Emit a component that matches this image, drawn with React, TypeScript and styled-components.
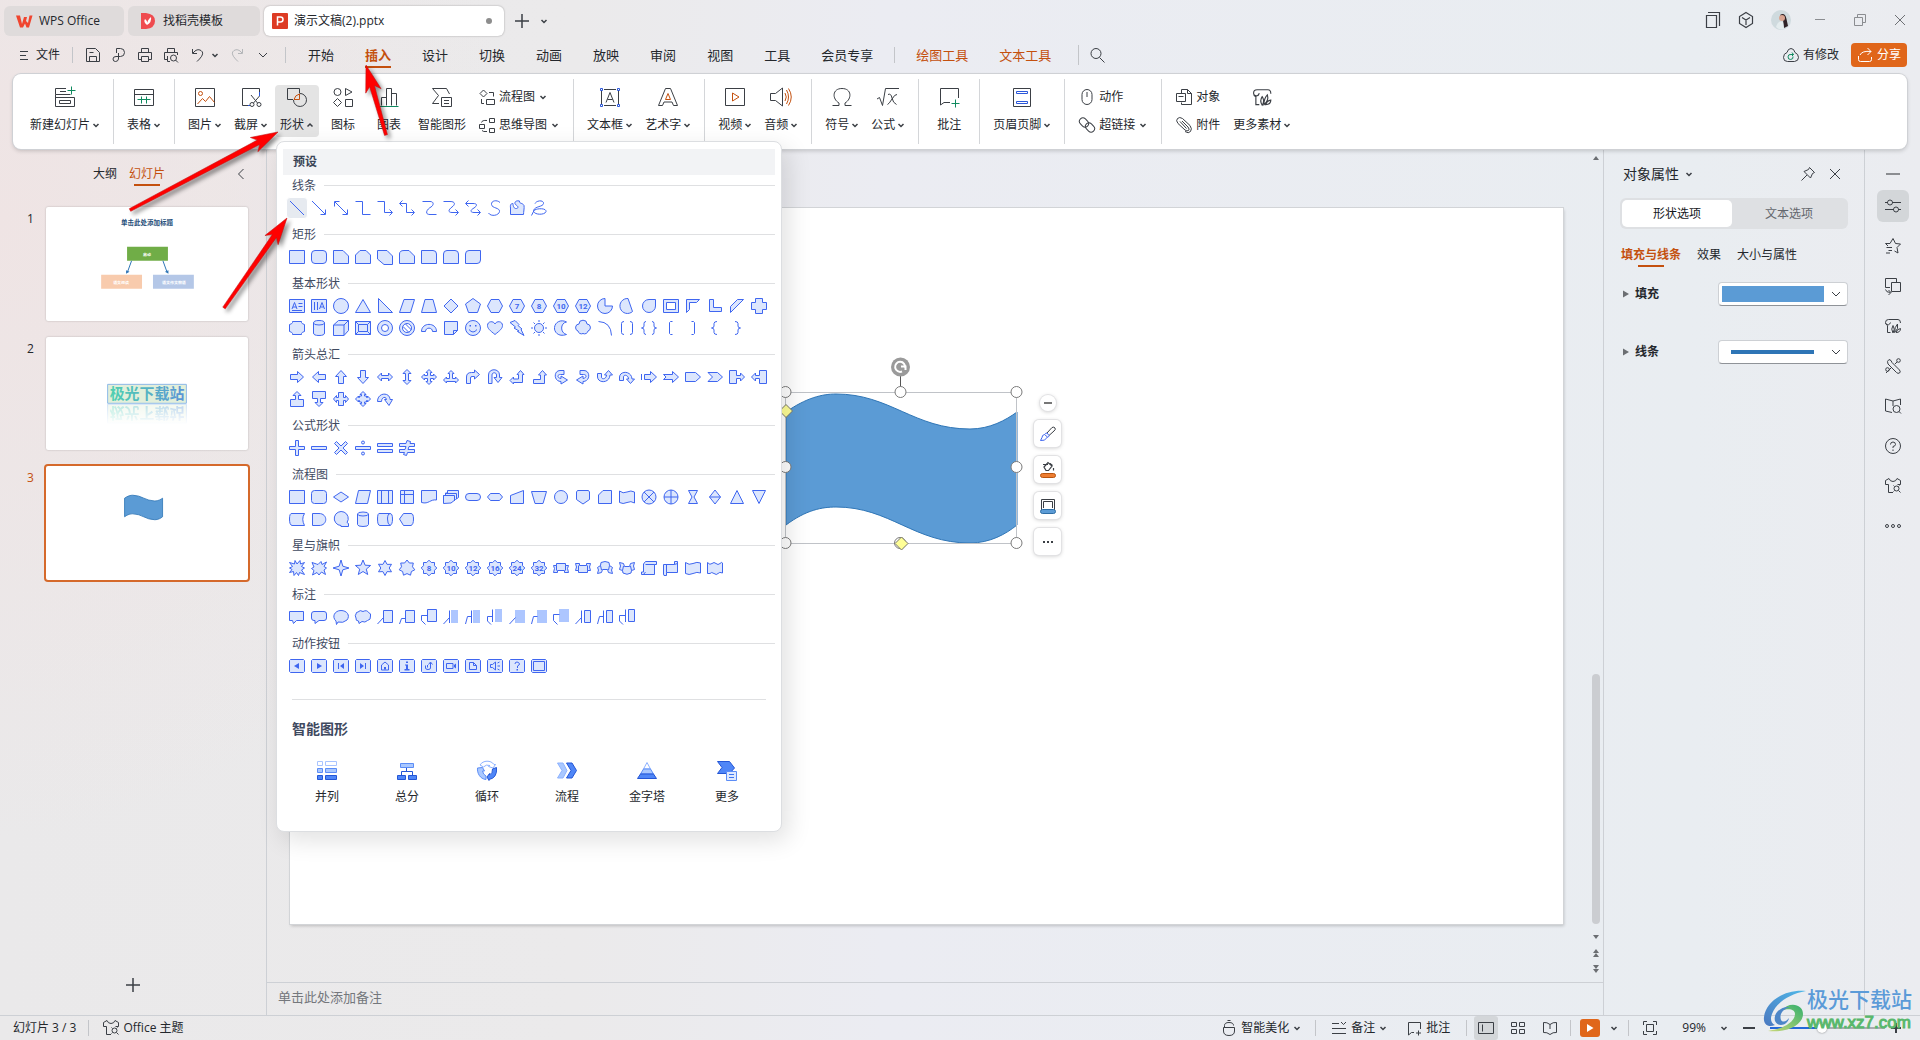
import React from "react";
import styled, { createGlobalStyle, css } from "styled-components";

/* ---------- palette ---------- */
const ink = "#24272c";
const line = "#3b3f45";
const brand = "#c4500e";
const orange = "#e0661a";
const blue = "#3f66f0";
const pale = "#dce6fd";
const green = "#0f8a5f";
const rule = "#cdd0d5";

const GlobalStyle = createGlobalStyle`
  * { box-sizing: border-box; }
  body {
    margin: 0;
    font-family: "Open Sans", "Noto Sans CJK SC", sans-serif;
    font-size: 12px;
    line-height: 16px;
    color: ${ink};
  }
  button, select, input { font: inherit; color: inherit; }
  ul { list-style: none; margin: 0; padding: 0; }
`;

const Page = styled.div`
  position: relative;
  display: flex;
  flex-direction: column;
  height: 100vh;
  overflow: hidden;
  background:
    radial-gradient(ellipse 520px 620px at 0 220px, #efe4e4 0%, rgba(239, 228, 228, 0) 100%),
    linear-gradient(90deg, #eae9ea 0, #ebeaeb 30%, #ebecf2 46%, #e9edf1 88%, #ebecf0 100%);
`;

const Bare = styled.button`
  display: flex;
  align-items: center;
  justify-content: center;
  border: 0;
  padding: 0;
  background: none;
  white-space: nowrap;
  cursor: pointer;
`;

/* ---------- svg helpers ---------- */
const Svg = styled.svg`
  display: block;
  flex: none;
  fill: none;
  stroke: ${(p) => p.color ?? line};
  overflow: visible;
`;

type IconProps = { size?: number; children: React.ReactNode; color?: string };
const Icon = ({ size = 16, children, color = line }: IconProps) => (
  <Svg width={size} height={size} viewBox={`0 0 ${size} ${size}`} color={color} aria-hidden="true">
    {children}
  </Svg>
);

const Caret = ({ up = false }: { up?: boolean }) => (
  <Svg width="8" height="8" viewBox="0 0 8 8" strokeWidth="1.5" aria-hidden="true">
    <path d={up ? "M1.5 5.5L4 3L6.5 5.5" : "M1.5 3L4 5.5L6.5 3"} />
  </Svg>
);

/* ---------- title bar ---------- */
const TitleBar = styled.header`
  display: flex;
  align-items: flex-end;
  height: 42px;
  padding: 0 0 6px 4px;
  gap: 4px;
`;

const DocTab = styled.button<{ $width: number; $active?: boolean }>`
  display: flex;
  align-items: center;
  gap: ${(p) => (p.$active ? 6 : 7)}px;
  width: ${(p) => p.$width}px;
  height: 30px;
  padding: 0 12px 0 ${(p) => (p.$active ? 8 : 12)}px;
  border: 0;
  border-radius: 6px;
  background: ${(p) => (p.$active ? "#fff" : "#dfdbdb")};
  box-shadow: ${(p) => (p.$active ? "0 0 2px rgba(0, 0, 0, 0.35)" : "none")};
  white-space: nowrap;
`;

const UnsavedDot = styled.span`
  width: 6px;
  height: 6px;
  margin-left: auto;
  border-radius: 50%;
  background: #8d8d8d;
`;

const IconButton = styled(Bare)<{ $w?: number; $h?: number }>`
  width: ${(p) => p.$w ?? 24}px;
  height: ${(p) => p.$h ?? 24}px;
`;

const WindowTools = styled.div`
  display: flex;
  align-items: center;
  height: 32px;
  margin-left: auto;
`;

/* ---------- menu row ---------- */
const MenuRow = styled.nav`
  display: flex;
  align-items: center;
  height: 26px;
  padding: 0 13px 0 19px;
`;

const QuickTools = styled.div`
  display: flex;
  align-items: center;
  gap: 10px;
  margin-left: 12px;
`;

const UndoGroup = styled.div`
  display: flex;
  align-items: center;
  gap: 6px;
`;

const VDivider = styled.span<{ $h?: number; $m?: string }>`
  flex: none;
  width: 1px;
  height: ${(p) => p.$h ?? 16}px;
  margin: ${(p) => p.$m ?? "0"};
  background: #c3c5c9;
`;

const MenuTabs = styled.div`
  display: flex;
  gap: 31px;
`;

const MenuTab = styled(Bare)<{ $active?: boolean; $tool?: boolean }>`
  height: 26px;
  font-size: 13px;
  color: ${(p) => (p.$active || p.$tool ? brand : ink)};
  font-weight: ${(p) => (p.$active ? 700 : 400)};
  box-shadow: ${(p) => (p.$active ? `inset 0 -2px ${brand}` : "none")};
`;

const FileButton = styled(Bare)`
  gap: 8px;
`;

const SyncButton = styled(Bare)`
  gap: 4px;
  margin-left: auto;
`;

const ShareButton = styled(Bare)`
  gap: 4px;
  width: 56px;
  height: 24px;
  margin-left: 12px;
  border-radius: 4px;
  background: ${orange};
  color: #fff;
`;

/* ---------- ribbon ---------- */
const Ribbon = styled.section`
  position: relative;
  z-index: 5;
  display: flex;
  flex: none;
  height: 75px;
  margin: 6px 13px 0;
  padding: 5px 4px;
  border-radius: 8px;
  background: #fff;
  box-shadow: 0 0 0 1px #cfd1d5, 0 2px 4px rgba(0, 0, 0, 0.18);
`;

const Group = styled.div`
  display: flex;
  align-items: flex-start;
  gap: 2px;
  padding: 6px 8px 0;
  & + & {
    border-left: 1px solid #d4d6d9;
  }
`;

const Tool = styled(Bare)<{ $active?: boolean }>`
  flex-direction: column;
  justify-content: flex-start;
  gap: 8px;
  min-width: 44px;
  height: 52px;
  padding: 0 5px;
  border-radius: 4px;
  background: ${(p) => (p.$active ? "#e4e4e4" : "none")};
`;

const ToolLabel = styled.span`
  display: flex;
  align-items: center;
  gap: 2px;
`;

const ToolStack = styled.div`
  display: flex;
  flex-direction: column;
  gap: 4px;
`;

const SmallTool = styled(Bare)`
  justify-content: flex-start;
  gap: 4px;
  height: 24px;
  padding: 0 6px;
`;

const PopupAnchor = styled.div`
  position: relative;
`;

/* ---------- shape gallery popup ---------- */
const Popup = styled.div`
  position: absolute;
  top: 56px;
  left: 1px;
  width: 506px;
  padding: 7px 6px 26px;
  border: 1px solid #dcdee1;
  border-radius: 8px;
  background: #fff;
  box-shadow: 6px 8px 24px rgba(0, 0, 0, 0.12);
`;

const PopupHeading = styled.h2`
  margin: 0;
  height: 26px;
  padding-left: 10px;
  background: #f2f3f5;
  font-size: 12px;
  line-height: 26px;
  color: #3a4456;
`;

const Section = styled.section`
  padding-bottom: 5px;
`;

const SectionTitle = styled.h3`
  display: flex;
  align-items: center;
  gap: 8px;
  height: 22px;
  margin: 0;
  padding-left: 9px;
  font-size: 12px;
  font-weight: 400;
  color: #3f4a5f;
  &::after {
    content: "";
    flex: 1;
    height: 1px;
    margin-bottom: 2px;
    background: #dfe0e2;
  }
`;

const ShapeGrid = styled.div`
  display: grid;
  grid-template-columns: repeat(22, 22px);
  padding-left: 3px;
`;

const ShapeButton = styled(Bare)<{ $active?: boolean }>`
  width: 22px;
  height: 22px;
  border: 1px solid #fff;
  border-radius: 4px;
  background: ${(p) => (p.$active ? "#e6eaf0" : "none")};
`;

const PopupRule = styled.hr`
  margin: 17px 9px 19px;
  border: 0;
  border-top: 1px solid #dfe0e2;
`;

const SmartHeading = styled.h2`
  margin: 0 0 21px;
  padding-left: 9px;
  font-size: 14px;
  line-height: 20px;
  color: #3f4a5f;
`;

const SmartRow = styled.div`
  display: grid;
  grid-template-columns: repeat(6, 80px);
  padding-left: 4px;
`;

const SmartButton = styled(Bare)`
  flex-direction: column;
  gap: 9px;
`;

/* ---------- body ---------- */
const Body = styled.main`
  display: flex;
  flex: 1;
  min-height: 0;
`;

const SlidePane = styled.aside`
  display: flex;
  flex-direction: column;
  flex: none;
  width: 267px;
  border-right: 1px solid ${rule};
`;

const PaneHeader = styled.div`
  display: flex;
  align-items: center;
  gap: 12px;
  margin: 12px 18px 20px 93px;
`;

const PaneTab = styled(Bare)<{ $active?: boolean }>`
  position: relative;
  height: 26px;
  color: ${(p) => (p.$active ? brand : ink)};
  ${(p) =>
    p.$active &&
    css`
      &::after {
        content: "";
        position: absolute;
        bottom: 1px;
        width: 26px;
        height: 2px;
        background: ${brand};
      }
    `}
`;

const CollapseButton = styled(Bare)`
  width: 14px;
  height: 26px;
  margin-left: auto;
`;

const SlideList = styled.ul`
  display: flex;
  flex-direction: column;
  gap: 16px;
  padding: 0 18px 0 27px;
`;

const SlideItem = styled.li<{ $active?: boolean }>`
  display: flex;
  color: ${(p) => (p.$active ? brand : ink)};
`;

const SlideNo = styled.span`
  width: 19px;
  padding-top: 4px;
`;

const Thumb = styled.div<{ $active?: boolean }>`
  flex: 1;
  aspect-ratio: 16 / 9;
  border-radius: 2px;
  background: #fff;
  box-shadow: ${(p) => (p.$active ? "0 0 0 2px #d5692b" : "0 0 2px rgba(0, 0, 0, 0.25)")};
  svg {
    display: block;
    width: 100%;
    height: 100%;
  }
`;

const AddSlide = styled(Bare)`
  width: 24px;
  height: 24px;
  margin: auto auto 18px;
`;

const Editor = styled.div`
  display: flex;
  flex-direction: column;
  flex: 1;
  min-width: 0;
`;

const Stage = styled.div`
  display: flex;
  flex: 1;
  min-height: 0;
`;

const SlideArea = styled.div`
  flex: 1;
  padding: 59px 25px 0 23px;
`;

const Slide = styled.div`
  position: relative;
  aspect-ratio: 16 / 9;
  background: #fff;
  box-shadow: 0 0 0 1px #d2d4d7, 1px 2px 3px rgba(0, 0, 0, 0.2);
`;

const SelectedShape = styled.svg`
  position: absolute;
  left: 484px;
  top: 148px;
  overflow: visible;
`;

const FloatTools = styled.div`
  position: absolute;
  left: 744px;
  top: 187px;
  display: flex;
  flex-direction: column;
  align-items: center;
  gap: 9px;
`;

const FloatButton = styled(Bare)<{ $round?: boolean }>`
  width: ${(p) => (p.$round ? 16 : 27)}px;
  height: ${(p) => (p.$round ? 16 : 27)}px;
  border-radius: ${(p) => (p.$round ? 8 : 5)}px;
  background: #fff;
  box-shadow: 0 0 0 1px #e2e2e4, 0 1px 4px rgba(0, 0, 0, 0.22);
`;

const ScrollColumn = styled.div`
  display: flex;
  flex-direction: column;
  align-items: center;
  width: 15px;
  padding: 1px 0 5px;
`;

const ScrollTrack = styled.div`
  display: flex;
  flex: 1;
  align-items: flex-end;
  padding-bottom: 5px;
`;

const ScrollThumb = styled.div`
  width: 8px;
  height: 33%;
  border-radius: 4px;
  background: #cbcdd1;
`;

const Notes = styled.div`
  height: 33px;
  padding: 6px 11px;
  border-top: 1px solid ${rule};
  font-size: 13px;
  color: #74777c;
`;

/* ---------- property panel ---------- */
const Panel = styled.aside`
  display: flex;
  flex-direction: column;
  flex: none;
  width: 261px;
  padding: 15px 16px 0;
  border-left: 1px solid ${rule};
`;

const PanelHeader = styled.div`
  display: flex;
  align-items: center;
  height: 20px;
  padding-left: 3px;
`;

const PanelTitle = styled(Bare)`
  gap: 6px;
  margin-right: auto;
  font-size: 14px;
`;

const Segments = styled.div`
  display: grid;
  grid-template-columns: 110px 1fr;
  height: 31px;
  margin-top: 14px;
  padding: 2px;
  border-radius: 6px;
  background: #dee0e3;
`;

const Segment = styled.button<{ $active?: boolean }>`
  border: 0;
  border-radius: 5px;
  padding: 0;
  background: ${(p) => (p.$active ? "#fff" : "none")};
  color: ${(p) => (p.$active ? "#15181c" : "#63676d")};
`;

const SubTabs = styled.div`
  display: flex;
  gap: 16px;
  margin-top: 13px;
  padding-left: 1px;
`;

const SubTab = styled(PaneTab)`
  font-weight: ${(p) => (p.$active ? 700 : 400)};
`;

const Property = styled.div`
  display: flex;
  align-items: center;
  gap: 6px;
  height: 24px;
  margin: 14px 0 20px;
  padding-left: 3px;
`;

const PropertyLabel = styled.label`
  font-weight: 700;
`;

const SelectBox = styled.div`
  position: relative;
  width: 130px;
  margin-left: auto;
  svg {
    position: absolute;
    right: 7px;
    top: 8px;
    pointer-events: none;
  }
`;

const Select = styled.select<{ $kind: "fill" | "line" }>`
  appearance: none;
  display: block;
  width: 100%;
  height: 24px;
  border: 1px solid #cdd0d4;
  border-bottom-color: #8f9398;
  border-radius: 4px;
  background: ${(p) =>
    p.$kind === "fill"
      ? "linear-gradient(#5b9bd5, #5b9bd5) 3px 3px / 102px 16px no-repeat #fff"
      : "linear-gradient(#2e75b6, #2e75b6) 12px 9px / 83px 4px no-repeat #fff"};
`;

const Rail = styled.div`
  display: flex;
  flex-direction: column;
  align-items: center;
  gap: 8px;
  flex: none;
  width: 56px;
  padding-top: 17px;
  border-left: 1px solid ${rule};
`;

const RailButton = styled(Bare)<{ $active?: boolean }>`
  width: 32px;
  height: 32px;
  border-radius: 6px;
  background: ${(p) => (p.$active ? "#d3d6d9" : "none")};
`;

/* ---------- status bar ---------- */
const StatusBar = styled.footer`
  display: flex;
  align-items: center;
  flex: none;
  height: 25px;
  padding: 0 18px 1px 13px;
  border-top: 1px solid ${rule};
`;

const StatusButton = styled(Bare)`
  gap: 4px;
`;

const StatusRight = styled.div`
  display: flex;
  align-items: center;
  margin-left: auto;
`;

const StatusGroup = styled.div<{ $gap?: number; $pad?: number }>`
  display: flex;
  align-items: center;
  gap: ${(p) => p.$gap ?? 8}px;
  height: 24px;
  padding: 0 ${(p) => p.$pad ?? 8}px;
  & + & {
    background: linear-gradient(#c3c5c9, #c3c5c9) 0 4px / 1px 16px no-repeat;
  }
`;

const ViewButton = styled(Bare)<{ $active?: boolean }>`
  width: 24px;
  height: 24px;
  border-radius: 3px;
  background: ${(p) => (p.$active ? "#d3d6d9" : "none")};
`;

const PlayButton = styled(Bare)`
  width: 20px;
  height: 18px;
  margin-left: 2px;
  border-radius: 3px;
  background: ${orange};
`;

const ZoomValue = styled.span`
  margin: 0 -4px 0 6px;
`;

const Zoom = styled.input`
  appearance: none;
  width: 115px;
  height: 12px;
  margin: 0 5px 0 14px;
  background: linear-gradient(90deg, #2468d8 52px, #a9acb1 52px) 0 5px / 100% 2px no-repeat;
  &::-webkit-slider-thumb {
    appearance: none;
    width: 10px;
    height: 10px;
    border-radius: 50%;
    background: #fff;
    box-shadow: 0 0 2px rgba(0, 0, 0, 0.5);
  }
`;

/* ---------- overlays ---------- */
const Annotations = styled.svg`
  position: absolute;
  left: 0;
  top: 0;
  z-index: 20;
  pointer-events: none;
  overflow: visible;
  filter: drop-shadow(3px 3px 2px rgba(0, 0, 0, 0.45));
`;

const Watermark = styled.div`
  position: absolute;
  right: 8px;
  bottom: 6px;
  z-index: 10;
  display: flex;
  align-items: center;
  pointer-events: none;
`;

const WatermarkText = styled.div`
  display: flex;
  flex-direction: column;
  font-size: 21px;
  line-height: 25px;
  font-weight: 500;
  color: #5b9bd8;
`;

const WatermarkUrl = styled.span`
  font-family: "Liberation Sans", sans-serif;
  font-size: 17px;
  line-height: 22px;
  font-weight: 400;
  color: #59b86c;
  -webkit-text-stroke: 1px #59b86c;
`;

/* ---------- gallery data ---------- */
const round = (v: number) => Math.round(v * 10) / 10;
const ring = (n: number, radii: number[], turn = 0) => {
  const pts: string[] = [];
  for (let i = 0; i < n; i++) {
    const a = ((i / n) * 360 + turn - 90) * (Math.PI / 180);
    const r = radii[i % radii.length];
    pts.push(`${round(9 + r * Math.cos(a))} ${round(9 + r * Math.sin(a))}`);
  }
  return `M${pts.join("L")}Z`;
};
const star = (n: number, outer = 8, inner = 3.5) => ring(n * 2, [outer, inner]);
const circle = (r: number, x = 9, y = 9) => `M${x - r} ${y}a${r} ${r} 0 1 0 ${2 * r} 0a${r} ${r} 0 1 0 ${-2 * r} 0Z`;

/* f: filled outline, s: open strokes, k: solid marks, b: light block, t: caption inside */
type Glyph = { f?: string; s?: string; k?: string; b?: string; t?: string };
const F = (f: string, s?: string): Glyph => ({ f, s });
const S = (s: string): Glyph => ({ s });
const T = (f: string, t: string): Glyph => ({ f, t });
const box = "M1.5 2.5H16.5V15.5H1.5Z";
const K = (k: string, s?: string): Glyph => ({ f: "M2.5 2.5H15.5L16.5 3.5V14.5L15.5 15.5H2.5L1.5 14.5V3.5Z", k, s });
const hex = "M5 2.5H13L16.5 9L13 15.5H5L1.5 9Z";
const burst = (t: string) => T(ring(16, [7.8, 6]), t);

const sections: { title: string; shapes: Glyph[] }[] = [
  {
    title: "线条",
    shapes: [
      S("M2 2L16 16"),
      S("M2 2L15 15M15.5 10.5V15.5H10.5"),
      S("M3 3L15 15M15.5 10.5V15.5H10.5M2.5 7.5V2.5H7.5"),
      S("M1.5 2.5H8.5V15.5H16.5"),
      S("M1.5 2.5H8.5V13.5H16M13.5 10.5L16.5 13.5L13.5 16.5"),
      S("M2 4.5H8.5V13.5H16M13.5 10.5L16.5 13.5L13.5 16.5M4.5 1.5L1.5 4.5L4.5 7.5"),
      S("M2.5 2.5H10C14 2.5 14 6 11 8C7 10 4 15.5 10 15.5H16.5"),
      S("M1.5 2.5H8C14 2.5 13 6 10 8C6 11 6 13.5 10 13.5H16M13.5 10.5L16.5 13.5L13.5 16.5"),
      S("M2 4.5H9C14 4.5 13 7 10 9C6 11 6 13.5 10 13.5H16M13.5 10.5L16.5 13.5L13.5 16.5M4.5 1.5L1.5 4.5L4.5 7.5"),
      S("M14 3.5C11 .5 5 1.5 5.5 5.5S14 8.5 13.5 12.5S5 18 2.5 14"),
      F("M2.5 15.5V9C2 5.5 3 4.500 5 4.500C5 7 6 10 8.500 9.500C11 9 10 7 8 6C5.500 4 7.500 1 11.500 2C11 5 14.500 3.500 16 6.500C16.500 9 15.500 13 15.500 15.5Z"),
      S("M5 4.5C7 1 14 1 13.5 4.5C13 8 5 7 3.5 11.5C3 16 15 16.5 16 12.5C16.5 9 7 9 4 11.5L1.5 16.5"),
    ],
  },
  {
    title: "矩形",
    shapes: [
      F(box),
      F("M5 2.5H13Q16.5 2.5 16.5 6V12Q16.5 15.5 13 15.5H5Q1.5 15.5 1.5 12V6Q1.5 2.5 5 2.5Z"),
      F("M1.5 2.5H11L16.5 8V15.5H1.5Z"),
      F("M6 2.5H12L16.5 7V15.5H1.5V7Z"),
      F("M1.5 2.5H11L16.5 8V16.5H8L1.5 11Z"),
      F("M6 2.5H11L16.5 8V15.5H1.5V6Q1.5 2.5 6 2.5Z"),
      F("M1.5 2.5H13Q16.5 2.5 16.5 6V15.5H1.5Z"),
      F("M5 2.5H13Q16.5 2.5 16.5 6V15.5H1.5V6Q1.5 2.5 5 2.5Z"),
      F("M5 2.5H16.5V12Q16.5 15.5 13 15.5H1.5V6Q1.5 2.5 5 2.5Z"),
    ],
  },
  {
    title: "基本形状",
    shapes: [
      F(box, "M4 12L6.5 5.5L9 12M5 10H8.5M10.5 6.5H14.5M10.5 9.5H14.5M4 13.5H14"),
      F(box, "M4.5 5V13M7.5 5V13M9.5 12L12 5.5L14.5 12M10.5 10H13.5"),
      F(circle(7.5)),
      F("M9 2.5L16.5 15.5H1.5Z"),
      F("M2.5 1.5L16.5 15.5H2.5Z"),
      F("M6 2.5H16.5L12.5 15.5H1.5Z"),
      F("M5 2.5H13L16.5 15.5H1.5Z"),
      F("M9 2L16 9L9 16L2 9Z"),
      F("M9 1.5L16.5 7L13.5 15.5H4.5L1.5 7Z"),
      F(hex),
      T(hex, "7"),
      T(hex, "8"),
      T(hex, "10"),
      T(hex, "12"),
      F("M9 1.5V9H16.5A7.5 7.5 0 1 1 9 1.5Z"),
      F("M10 1.5L14.5 14.5A7.5 7.5 0 1 1 10 1.5Z"),
      F("M9 2.5H15.5V9A6.5 6.5 0 1 1 9 2.5Z"),
      F("M1.5 2.5H16.5V15.5H1.5ZM4.5 5.5V12.5H13.5V5.5Z"),
      F("M2.5 2.5H15.5L12.5 5.5H5.5V12.5L2.5 15.5Z"),
      F("M3.5 2.5H7.5V10.5H15.5V14.5H3.5Z"),
      F("M9.5 2.5H15.5L2.5 15.5V9.5Z"),
      F("M5.5 1.5H12.5V5.5H16.5V12.5H12.5V16.5H5.5V12.5H1.5V5.5H5.5Z"),
      F("M4.5 2.5H13.5V3.5Q14 5 16.5 5.5V12.5Q14 13 13.5 14.5V15.5H4.5V14.5Q4 13 1.5 12.5V5.5Q4 5 4.5 3.5Z"),
      F("M3.5 4Q3.5 1.5 9 1.5T14.5 4V14Q14.5 16.5 9 16.5T3.5 14Z", "M3.5 4Q3.5 6 9 6T14.5 4"),
      F("M6.5 1.5H16.5V11.5L12 16.5H1.5V6Z", "M1.5 6H12V16.5M12 6L16.5 1.5"),
      F("M1.5 2.5H16.5V15.5H1.5Z", "M4.5 5.5H13.5V12.5H4.5ZM1.5 2.5L4.5 5.5M16.5 2.5L13.5 5.5M1.5 15.5L4.5 12.5M16.5 15.5L13.5 12.5"),
      F(circle(7.5) + circle(3.5)),
      F(circle(7.5) + circle(4.5), "M5 7.5L11 13.5M7.5 5L13.5 11"),
      F("M1.5 12.5C1.5 3 16.5 3 16.5 12.5H12.5C12.5 8 5.5 8 5.5 12.5Z"),
      F("M2.5 2.5H15.5V11.5L11.5 15.5H2.5Z", "M15.5 11.5H11.5V15.5"),
      { f: circle(7.5), s: "M5 10.5Q9 15.5 13 10.5", k: "M5.5 6H7V7.5H5.5ZM11 6H12.5V7.5H11Z" },
      F("M9 15.5C4 11.5 1.5 9.5 1.5 6.5C1.5 2 7.5 1.5 9 5C10.5 1.5 16.5 2 16.5 6.5C16.5 9.5 14 11.5 9 15.5Z"),
      F("M2 3.5L7 1.5L11 5.500L10 6.500L14 10L13 10.500L16 16.500L9.500 12.500L11 12L6 9L7.500 8Z"),
      F(circle(4.5), "M9 1V3M9 15V17M1 9H3M15 9H17M3.5 3.5L5 5M13 13L14.5 14.5M3.5 14.5L5 13M13 5L14.5 3.5"),
      F("M14.5 3C8 4 8 14 14.5 15.5C6 18.5 2 12.5 2.5 8.5C3 3 9 0 14.5 3Z"),
      F("M5 5A4 3.800 0 0 1 13 5A3.600 3.600 0 0 1 14 12A3.500 3.500 0 0 1 9 14.500A3.500 3.500 0 0 1 4 12A3.600 3.600 0 0 1 5 5Z"),
      S("M2.5 2.5Q15 3 15.5 16.5"),
      S("M6 2.5Q3.5 2.5 3.5 4.5V13.5Q3.5 15.5 6 15.5M12 2.5Q14.5 2.5 14.5 4.5V13.5Q14.5 15.5 12 15.5"),
      S("M6 2.5Q4 2.5 4 4.5V7Q4 9 1.5 9Q4 9 4 11V13.5Q4 15.5 6 15.5M12 2.5Q14 2.5 14 4.5V7Q14 9 16.5 9Q14 9 14 11V13.5Q14 15.5 12 15.5"),
      S("M10.5 2.5H8.5L7.5 3.5V14.5L8.5 15.5H10.5"),
      S("M7.5 2.5H9.5L10.5 3.5V14.5L9.5 15.5H7.5"),
      S("M11 2.5Q8 2.5 8 4.5V7Q8 9 5.5 9Q8 9 8 11V13.5Q8 15.5 11 15.5"),
      S("M7 2.5Q10 2.5 10 4.5V7Q10 9 12.5 9Q10 9 10 11V13.5Q10 15.5 7 15.5"),
    ],
  },
  {
    title: "箭头总汇",
    shapes: [
      F("M2.5 6.5H9.5V3.5L15.5 9L9.5 14.5V11.5H2.5Z"),
      F("M15.5 6.5H8.5V3.5L2.5 9L8.5 14.5V11.5H15.5Z"),
      F("M6.5 15.5V8.5H3.5L9 2.5L14.5 8.5H11.5V15.5Z"),
      F("M6.5 2.5V9.5H3.5L9 15.5L14.5 9.5H11.5V2.5Z"),
      F("M1.5 9L5.5 5V7.5H12.5V5L16.5 9L12.5 13V10.5H5.5V13Z"),
      F("M9 1.5L13 5.5H10.5V12.5H13L9 16.5L5 12.5H7.5V5.5H5Z"),
      F("M9 1.5L12 4.5H10.5V7.5H13.5V6L16.5 9L13.5 12V10.5H10.5V13.5H12L9 16.5L6 13.5H7.5V10.5H4.5V12L1.5 9L4.5 6V7.5H7.5V4.5H6Z"),
      F("M9 2.5L12 5.5H10.5V10.5H13.5V9L16.5 12L13.5 15V13.5H4.5V15L1.5 12L4.5 9V10.5H7.5V5.5H6Z"),
      F("M2.5 15.5V9Q2.5 4.5 7.5 4.5H10.5V2L15.5 6.5L10.5 11V8.5H8Q6.5 8.5 6.5 10V15.5Z"),
      F("M2.5 15.5V7C2.5 0 13.5 0 13.5 7V9.5H16L12 14.5L8 9.5H10.5V7C10.5 4 6 4 6 7V15.5Z"),
      F("M12.5 2.5L16 6.5H14.5V14.5H5.5V16L2 12.5L5.5 9V11H10.5V6.5H9Z"),
      F("M12.5 2.5L16.5 7H14.5V15.5H3.5V11.5H10.5V7H8.5Z"),
      F("M12 2.5H8C1.5 2.5 1.5 13.5 9 13.5V16L15.5 12L9 8V10.5C5 10 5 6.5 8.5 6.5H12Z"),
      F("M6 2.5H10C16.5 2.5 16.5 13.5 9 13.5V16L2.5 12L9 8V10.5C13 10 13 6.5 9.5 6.5H6Z"),
      F("M1.5 5.5V9C2 15.5 13.5 15.5 14 7H16.5L12.5 2.5L8.5 7H10.5C10.5 11 5.5 12 5.5 9V5.5Z"),
      F("M1.5 12.5V9C2 2.5 13.5 2.5 14 11H16.5L12.5 15.5L8.5 11H10.5C10.5 7 5.5 6 5.5 9V12.5Z"),
      F("M4.5 6.5H10.5V3.5L16.5 9L10.5 14.5V11.5H4.5Z", "M1.5 6V12"),
      F("M1.5 6.5H10.5V3.5L16.5 9L10.5 14.5V11.5H1.5L4 9Z"),
      F("M1.5 4.5H11.5L16.5 9L11.5 13.5H1.5Z"),
      F("M2 4.5H11.5L16.5 9L11.5 13.5H2L6.5 9Z"),
      F("M1.5 2.5H8.5V7.5H12.5V5L16.5 9L12.5 13V10.5H8.5V15.5H1.5Z"),
      F("M16.5 2.5H9.5V7.5H5.5V5L1.5 9L5.5 13V10.5H9.5V15.5H16.5Z"),
      F("M2.5 16.5V9.5H7.5V5.5H5L9 1.5L13 5.5H10.5V9.5H15.5V16.5Z"),
      F("M2.5 1.5V8.5H7.5V12.5H5L9 16.5L13 12.5H10.5V8.5H15.5V1.5Z"),
      F("M6.5 2.5H11.5V7.5H13.5V5.5L16.5 9L13.5 12.5V10.5H11.5V15.5H6.5V10.5H4.5V12.5L1.5 9L4.5 5.5V7.5H6.5Z"),
      F("M9 1.5L12 4.5H10.5V6H12.5V7.5H13.5V6L16.5 9L13.5 12V10.5H12.5V12H10.5V13.5H12L9 16.5L6 13.5H7.5V12H5.5V10.5H4.5V12L1.5 9L4.5 6V7.5H5.5V6H7.5V4.5H6Z"),
      F("M1.5 11.5C1.5 2 14 2 14 9.5H16.5L13 15.5L8.5 9.5H10.5C10 6 5.5 7 5.5 11.5Z"),
    ],
  },
  {
    title: "公式形状",
    shapes: [
      F("M7.5 1.5H10.5V7.5H16.5V10.5H10.5V16.5H7.5V10.5H1.5V7.5H7.5Z"),
      F("M1.5 7.5H16.5V10.5H1.5Z"),
      F("M4.5 2.5L9 7L13.5 2.5L15.5 4.5L11 9L15.5 13.5L13.5 15.5L9 11L4.5 15.5L2.5 13.5L7 9L2.5 4.5Z"),
      F("M1.5 7.5H16.5V10.5H1.5Z" + circle(1.5, 9, 3.5) + circle(1.5, 9, 14.5)),
      F("M1.5 4.5H16.5V7.5H1.5ZM1.5 10.5H16.5V13.5H1.5Z"),
      F("M1.5 4.5H8L9 1.5L12.5 2.5L12 4.5H16.5V7.5H11L10 10.5H16.5V13.5H9.5L8.5 16.5L5.5 15.5L6.5 13.5H1.5V10.5H7L8 7.5H1.5Z"),
    ],
  },
  {
    title: "流程图",
    shapes: [
      F(box),
      F("M4.5 2.5H13.5Q16.5 2.5 16.5 5.5V12.5Q16.5 15.5 13.5 15.5H4.5Q1.5 15.5 1.5 12.5V5.5Q1.5 2.5 4.5 2.5Z"),
      F("M9 4L16.5 9L9 14L1.5 9Z"),
      F("M4.5 2.5H16.5L13.5 15.5H1.5Z"),
      F(box, "M5.5 2.5V15.5M12.5 2.5V15.5"),
      F("M2.5 2.5H15.5V15.5H2.5Z", "M2.5 6.5H15.5M6.5 2.5V15.5"),
      F("M1.5 2.5H16.5V12C10 11 9 16.5 1.5 14.5Z"),
      F("M5.5 2.5H16.5V9.5L13.5 11.5L9 15L1.5 15.5V7.5H3.5V5H5.5Z", "M3.5 5.5H14.5V11M1.5 7.5H12.5V13"),
      F("M5 5.5H13A3.5 3.5 0 0 1 13 12.5H5A3.5 3.5 0 0 1 5 5.5Z"),
      F("M4.5 5.5H13.5L16.5 9L13.5 12.5H4.5L1.5 9Z"),
      F("M2.5 7.5L15.5 2.5V15.5H2.5Z"),
      F("M1.5 3.5H16.5L13 15.5H5Z"),
      F(circle(6.5)),
      F("M3.5 2.5H14.5L15.5 4V11.5L9 16L2.5 11.5V4Z"),
      F("M7 2.5H15.5V15.5H2.5V7Z"),
      F("M1.5 3Q5 6 9 4T16.5 4V15Q13 12.5 9 14.5T1.5 14.5Z"),
      F(circle(7), "M4 4L14 14M14 4L4 14"),
      F(circle(7), "M9 2V16M2 9H16"),
      F("M4.5 2.5H13.5L10 9L13.5 15.5H4.5L8 9Z"),
      F("M9 2L14.5 9L9 16L3.5 9Z", "M3.5 9H14.5"),
      F("M9 2.5L15.5 15.5H2.5Z"),
      F("M2.5 2.5H15.5L9 15.5Z"),
      F("M4 3.5H16.5Q13 9 16.5 15.5H4Q1.5 15 1.5 9T4 3.5Z"),
      F("M2.5 3.5H9C18 3.5 18 15.5 9 15.5H2.5Z"),
      F("M9 15.5A7 7 0 1 1 15 12.5L16.5 13.5V16.5H9Z"),
      F("M3.5 4Q3.5 2 9 2T14.5 4V14.5Q14.5 16.5 9 16.5T3.5 14.5Z", "M3.5 4Q3.5 6 9 6T14.5 4"),
      F("M4 3.5H14Q16.5 3.5 16.5 9T14 15.5H4Q1.5 15.5 1.5 9T4 3.5Z", "M14 3.5Q11.5 4 11.5 9T14 15.5"),
      F("M5.5 3.5H13Q15.5 3.5 15.5 9T13 15.5H5.5L1.5 9Z"),
    ],
  },
  {
    title: "星与旗帜",
    shapes: [
      F("M9 5L12 1.5L12.5 5L16.5 3.5L13.5 7.5L16.5 9L13.5 11L16.5 15.5L11.5 13.5L10.500 16.500L8.500 13.500L6 16.500L5.500 12.500L1.500 13.500L4 10.500L1.500 9L4.500 7.500L1.500 3.500L6.500 5L7 1.500Z"),
      F("M8 5.500L11 2.500L12 5.500L16.500 3L14 7.500L16.500 9L14 11L15.500 15.500L11.500 13L9 16L7 13.500L2.500 16L4 11.500L1.500 9.500L4 8L2 3.500L6.500 5Z"),
      F(star(4, 8, 2.5)),
      F(star(5, 8, 3.5)),
      F(star(6, 7.5, 4.2)),
      F(star(7, 8, 5.6)),
      burst("8"),
      burst("10"),
      burst("12"),
      burst("16"),
      burst("24"),
      burst("32"),
      F("M4.5 4.5H13.5V6.5H16.5L15.5 9.5L16.5 13.5H12.5V11.5H5.5V13.5H1.5L2.5 9.5L1.5 6.5H4.5Z", "M4.5 6.5V11.5M13.5 6.5V11.5"),
      F("M1.5 4.5H5.5V6.5H12.5V4.5H16.5L15.5 8L16.5 11.5H13.5V13.5H4.5V11.5H1.5L2.5 8Z", "M4.5 6.5V11.5M13.5 6.5V11.5"),
      F("M5 3.5Q9 1.5 13 3.5L13.5 6.5L16.5 8.5L15.5 11L16.5 14.5L12.5 13.5L11.5 10.5H6.5L5.5 13.5L1.5 14.5L2.5 11L1.5 8.5L4.5 6.5Z", "M4.5 6.5L5.5 11M13.5 6.5L12.5 11"),
      F("M1.5 3.5L5.5 4.5L6.5 7.5H11.5L12.5 4.5L16.5 3.5L15.5 7L16.5 10.5L13.5 11.5L13 14Q9 16.5 5 14L4.5 11.5L1.5 10.5L2.5 7Z", "M4.5 11.5L5.5 7M13.5 11.5L12.5 7"),
      F("M5.5 2.5H16.5V5.5H14.5V15.5H1.5V13H3.5V5Z", "M5.5 5.5H14.5M3.5 15.5L5.5 13"),
      F("M1.5 5.5H12.5V2.5H15.5V13.5H4.5V16.5H2L1.5 15Z", "M4.5 5.5V13.5M12.5 5.5L15.5 4.5"),
      F("M1.5 3.5Q5 6.5 9 4.5T16.5 4V14Q13 12.5 9 14.5T1.5 14.5Z"),
      F("M1.5 3.5Q4 6.5 6 4.5T10 4.5T14 4.5T16.5 4V14Q13.5 12.5 12 14.5T8 14.5T4 14.5L1.5 14.5Z"),
    ],
  },
  {
    title: "标注",
    shapes: [
      F("M1.5 3.5H15.5V12.5H8.5L5.5 15.5L4.5 12.5H1.5Z"),
      F("M4 3.5H14Q16.5 3.5 16.5 6V10Q16.5 12.5 14 12.5H9L5 15.5V12.5H4Q1.5 12.5 1.5 10V6Q1.5 3.5 4 3.5Z"),
      F("M6 14L4.5 16.5L4 13C-.5 9 2.500 2.500 9 2.500C15 2.500 18.500 7.500 15 12Q11 15.5 6 14Z"),
      F("M4 4Q6 1.5 9 3.5Q13 1.5 14.5 4.5Q17.5 5.5 16.5 8Q17 12 13.5 12.5Q11 15 8 13.5L5 15.5L4.5 13Q1.5 13 2 10Q.5 7.5 2 6Q2 4 4 4Z"),
      F("M7.5 2.5H16.5V14.5H7.5Z", "M1.5 16L7.5 9.5"),
      F("M7.5 2.5H16.5V14.5H7.5Z", "M1.5 16L3.5 10.5H7.5"),
      F("M7.5 1.5H16.5V13.5H7.5Z", "M5.5 16.5L1.5 12.5V7.5H7.5"),
      { b: "M9 2H16V15H9Z", s: "M7.5 2.5V15M1.5 16L7.5 9.5" },
      { b: "M9 2H16V15H9Z", s: "M7.5 2.5V15M1.5 16L3.5 8.5H7.5" },
      { b: "M9 1H16V14H9Z", s: "M6.5 1.5V14M5 16.5L1.5 13V8.5H6.5" },
      { b: "M7 2H17V15H7Z", s: "M1.5 16L7.5 9.5" },
      { b: "M7 2H17V15H7Z", s: "M1.5 16L3.5 8.5H7.5" },
      { b: "M7 1H17V14H7Z", s: "M5.5 16.5L1.5 12.5V6.5H7.5" },
      F("M10.5 2.5H16.5V14.5H10.5Z", "M7.5 2.5V15M1.5 16L7.5 9.5"),
      F("M10.5 2.5H16.5V14.5H10.5Z", "M7.5 2.5V15M1.5 16L3.5 8.5H7.5"),
      F("M10.5 1.5H16.5V13.5H10.5Z", "M7.5 1.5V14M5 16.5L1.5 13V7.5H7.5"),
    ],
  },
  {
    title: "动作按钮",
    shapes: [
      K("M11 6V12L6 9Z"),
      K("M7 6V12L12 9Z"),
      K("M12 6V12L8 9ZM6 6H7V12H6Z"),
      K("M6 6V12L10 9ZM11 6H12V12H11Z"),
      K("M8 10H10V12.5H8Z", "M5.5 13V8L9 5L12.5 8V13Z"),
      K("M8 4.5H10V6H8ZM7 7.5H10V12H11.5V13.5H6.5V12H8V8.5H7Z"),
      K("", "M5.5 8.5V11Q5.5 12.5 8 12.5T10.5 11V5.5M8.5 7.5L10.5 5L12.5 7.5M7.5 8V10.5"),
      K("M12 8L14 6.5V11.5L12 10Z", "M4.5 6.5H11V11.5H4.5Z"),
      K("", "M5.5 5.5H9.5L12.5 8.5V12.5H5.5ZM9.5 5.5V8.5H12.5"),
      K("", "M4.5 7.5H6.5L9.5 5V13L6.5 10.5H4.5ZM11.5 6L13.5 5M11.5 9H14M11.5 12L13.5 13"),
      K("M8.5 12H10V13.5H8.5Z", "M7 7Q7 5 9 5T11.5 7Q11.5 8 9.5 9V11"),
      K("", "M3.5 4.5H14.5V13.5H3.5Z"),
    ],
  },
];

const ShapeIcon = ({ g }: { g: Glyph }) => (
  <Icon size={18} color={blue}>
    {g.b && <path d={g.b} fill="#adc6ff" stroke="none" />}
    {g.f && <path d={g.f} fill={pale} fillRule="evenodd" />}
    {g.s && <path d={g.s} />}
    {g.k && <path d={g.k} fill={blue} stroke="none" />}
    {g.t && (
      <text x="9" y="12" textAnchor="middle" fontSize="8" fontWeight="700" fill={blue} stroke="none" fontFamily="Roboto, sans-serif">
        {g.t}
      </text>
    )}
  </Icon>
);

const smartItems: { label: string; icon: React.ReactNode }[] = [
  {
    label: "并列",
    icon: (
      <>
        <path d="M.5 1.5H5.5V5.5H.5ZM8.5 1.5H19.5V5.5H8.5Z" stroke="#a9c4ff" />
        <path d="M.5 8.5H5.5V12.5H.5ZM8.5 8.5H19.5V12.5H8.5Z" stroke="#5c8df6" fill="#a9c8ff" />
        <path d="M.5 15.5H5.5V19.5H.5ZM8.5 15.5H19.5V19.5H8.5Z" stroke="#2456d6" fill="#4f86f7" />
      </>
    ),
  },
  {
    label: "总分",
    icon: (
      <>
        <path d="M9.5 7V11.5M4.5 15V11.5H15.5V15" stroke="#2456d6" />
        <path d="M3.5 3.5H16.5V7.5H3.5Z" stroke="#5c8df6" fill="#a9c8ff" />
        <path d="M.5 15.5H8.5V19.5H.5ZM11.5 15.5H19.5V19.5H11.5Z" stroke="#2456d6" fill="#4f86f7" />
      </>
    ),
  },
  {
    label: "循环",
    icon: (
      <>
        <path d="M3 5C6 0 14 0 17 4.5L18.5 4.5L16 8L11.5 6.5L13 5.5Q9 4 6.5 7Z" stroke="#8db2ff" />
        <path d="M.5 8L5.5 7.5L7.5 11L5.5 11Q6 14.5 9 16V19.5C3 19 0 13 .5 8Z" stroke="#5c8df6" fill="#a9c8ff" />
        <path d="M19.5 7.5Q20.5 18 12 19.5V20.5L10 17L12.5 13.5V15Q16 13 15.5 9Z" stroke="#2456d6" fill="#4f86f7" />
      </>
    ),
  },
  {
    label: "流程",
    icon: (
      <>
        <path d="M.5 3H6L10 10.5L6 18H.5L5 10.5Z" stroke="#8db2ff" fill="#a9c8ff" />
        <path d="M9.5 3H15L19.5 10.5L15 18H9.5L14 10.5Z" stroke="#2456d6" fill="#4f86f7" />
      </>
    ),
  },
  {
    label: "金字塔",
    icon: (
      <>
        <path d="M10 2.5L13.5 9H6.5Z" stroke="#8db2ff" />
        <path d="M6.5 9H13.5L16.5 14H3.5Z" stroke="#5c8df6" fill="#a9c8ff" />
        <path d="M3.5 14H16.5L19.5 18.5H.5Z" stroke="#2456d6" fill="#4f86f7" />
      </>
    ),
  },
  {
    label: "更多",
    icon: (
      <>
        <path d="M.5 1.5H12.5L17.5 8L12.5 13.5H.5L5 7.5Z" stroke="#2456d6" fill="#4f86f7" />
        <path d="M9.5 11.5H19.5V20.5H9.5Z" stroke="#5c8df6" fill="#dfe9ff" />
        <path d="M12 14.5H17M12 17.5H17" stroke="#3f76f0" />
      </>
    ),
  },
];

const ShapePopup = () => (
  <Popup role="dialog" aria-label="形状">
    <PopupHeading>预设</PopupHeading>
    {sections.map((s, si) => (
      <Section key={s.title}>
        <SectionTitle>{s.title}</SectionTitle>
        <ShapeGrid>
          {s.shapes.map((g, i) => (
            <ShapeButton key={i} $active={si === 0 && i === 0} aria-label={`${s.title} ${i + 1}`}>
              <ShapeIcon g={g} />
            </ShapeButton>
          ))}
        </ShapeGrid>
      </Section>
    ))}
    <PopupRule />
    <SmartHeading>智能图形</SmartHeading>
    <SmartRow>
      {smartItems.map((m) => (
        <SmartButton key={m.label}>
          <Icon size={20}>{m.icon}</Icon>
          {m.label}
        </SmartButton>
      ))}
    </SmartRow>
  </Popup>
);

/* ---------- ribbon tools ---------- */
type ToolProps = { label: string; caret?: "down" | "up"; active?: boolean; children: React.ReactNode };
const RibbonTool = ({ label, caret, active, children }: ToolProps) => (
  <Tool $active={active}>
    <Icon size={24}>{children}</Icon>
    <ToolLabel>
      {label}
      {caret && <Caret up={caret === "up"} />}
    </ToolLabel>
  </Tool>
);

const RibbonSmall = ({ label, caret, children }: ToolProps) => (
  <SmallTool>
    <Icon>{children}</Icon>
    {label}
    {caret && <Caret />}
  </SmallTool>
);

const materialIcon = (
  <>
    <path d="M5.5 14.500H2.500V7.500Q.5 6.500 .5 4.500Q.5 1.500 3.500 1.500H13Q15.500 1.500 15.500 5M.5 5.500Q4 8.500 5.500 4.500" />
    <path d="M8 15Q5.500 11 8 7.500Q10.500 11 8 15ZM9.500 14.500Q9.500 9 12.500 6Q14 11 9.500 14.500ZM11 14.500Q12 11 15.500 10.500Q15.500 14.500 11 14.500Z" />
  </>
);
const shirtIcon = (
  <>
    <path d="M8 14.5H3.5V6.5H.5V2.5L4 .5Q5 3.500 8 3.500T12 .5L15.500 2.5V6.500H12.5" />
    <circle cx="11.5" cy="10.5" r="2.5" />
    <path d="M8.5 7.5L9.5 8.5M14.5 7.5L13.5 8.5M8.5 13.5L9.5 12.5M13.5 12.5L15.5 14.5" />
  </>
);
const commentIcon = <path d="M8 12.5H5.5L2.5 15V2.5H14.5V9M12.5 10.5V15.5M10 13H15" />;

const RibbonBar = () => (
  <Ribbon aria-label="插入">
    <Group>
      <RibbonTool label="新建幻灯片" caret="down">
        <path d="M13 3.5H2.5V9.5H17.5M7 6.5H13M2.5 9.5V21.500H21.5V12.5H2.5M6.500 15.500H17.500V18.5H6.500Z" />
        <path d="M18.5 1.5V9.5M14.5 5.5H22.5" stroke={green} />
      </RibbonTool>
    </Group>
    <Group>
      <RibbonTool label="表格" caret="down">
        <path d="M2.5 4.5H21.5V20.5H2.5ZM2.5 9.5H21.5" />
        <path d="M5.5 14.5H18.5M9.5 11.5V18.5M14.5 11.5V18.5" stroke={green} />
      </RibbonTool>
    </Group>
    <Group>
      <RibbonTool label="图片" caret="down">
        <path d="M2.5 3.5H21.5V21.5H2.5Z" />
        <circle cx="7.5" cy="8.5" r="2" stroke={brand} />
        <path d="M4.5 19L9.5 13.5L12.5 16.5L16.5 11.5L21.5 17.5" stroke={brand} />
      </RibbonTool>
      <RibbonTool label="截屏" caret="down">
        <path d="M9 20.5H3.5V3.5H20.5V7" />
        <path d="M20.5 7V11M9 20.5H11" stroke="#2b57d9" />
        <path d="M12 10L18.5 18M20.5 11L14.5 18" />
        <circle cx="13" cy="19.5" r="2" />
        <circle cx="20" cy="19.5" r="2" />
      </RibbonTool>
      <PopupAnchor>
        <RibbonTool label="形状" caret="up" active>
          <path d="M8 14.5H2.5V3.5H14.5V8" />
          <path d="M14.5 8.500A6.500 6.500 0 1 1 8.500 15" />
          <path d="M14.5 9V14.5H9Q10 10 14.5 9Z" stroke={brand} />
        </RibbonTool>
        <ShapePopup />
      </PopupAnchor>
      <RibbonTool label="图标">
        <circle cx="6.5" cy="7" r="3.5" />
        <path d="M14.5 3.5V10.5L21 7ZM6.5 13.5L10.5 17.5L6.5 21.5L2.5 17.5ZM14.5 14.5H21.5V21.5H14.5Z" />
      </RibbonTool>
      <RibbonTool label="图表">
        <path d="M4.5 20.5V12.5H9.5M9.5 20.5V3.5H14.5V20.5M14.5 8.5H19.5V20.5" />
        <path d="M2.5 21.5H21.5" stroke={green} />
      </RibbonTool>
      <RibbonTool label="智能图形">
        <path d="M9 18.5H2.5L8.5 10.5L2.5 3.5H16.5L19.5 9M11.5 12.5H21.5V21.5H11.5ZM14 15.5H19M14 18.5H19" />
      </RibbonTool>
      <ToolStack>
        <RibbonSmall label="流程图" caret="down">
          <path d="M4.5 1L8 4.5L4.5 8L1 4.5ZM10 3.5H14.5V7.5M2.5 10V14.5H5M7.5 10.5H15.5V15.5H7.5Z" />
        </RibbonSmall>
        <RibbonSmall label="思维导图" caret="down">
          <path d="M.5 7.5H5.5V11.5H.5ZM10.5 1.5H15.5V5.5H10.5ZM10.5 11.5H15.5V15.5H10.5ZM2.5 5.5Q3 3 8 3.5M3 13.5Q4 15 8 14.5" />
        </RibbonSmall>
      </ToolStack>
    </Group>
    <Group>
      <RibbonTool label="文本框" caret="down">
        <path d="M3.5 5V20M20.5 5V20M6 4.5H18M6 20.5H18M8 17.5L12 7.5L16 17.5M9.5 14.5H14.5" />
        <path d="M2.5 3.5H4.5V5.5H2.5ZM19.5 3.5H21.5V5.5H19.5ZM2.5 19.5H4.5V21.5H2.5ZM19.5 19.5H21.5V21.5H19.5Z" stroke="#2b57d9" fill="#fff" />
      </RibbonTool>
      <RibbonTool label="艺术字" caret="down">
        <path d="M2.5 20.5L9.5 3.5H14.5L21.5 20.5H17.5L16 17H8L6.5 20.5Z" />
        <path d="M12 8.5L14.5 14.5H9.5Z" stroke={brand} />
      </RibbonTool>
    </Group>
    <Group>
      <RibbonTool label="视频" caret="down">
        <path d="M2.5 3.5H21.5V20.5H2.5Z" />
        <path d="M9.5 8V16L16 12Z" stroke={brand} />
      </RibbonTool>
      <RibbonTool label="音频" caret="down">
        <path d="M1.5 8.5H6.5L13.5 3V21L6.5 15.5H1.5Z" />
        <path d="M16 8Q18.5 12 16 16M17.5 5Q21.5 12 17.5 19M19.5 3.5Q25 12 19.5 20.5" stroke={brand} />
      </RibbonTool>
    </Group>
    <Group>
      <RibbonTool label="符号" caret="down">
        <path d="M2.5 20.5H9V18C2 14 2 3.5 12 3.5S22 14 15 18V20.5H21.5" />
      </RibbonTool>
      <RibbonTool label="公式" caret="down">
        <path d="M1 14L3.5 12.5L6.5 20.5L9.5 3.5H23M12 9.5Q15 8 16 13T20.5 19.5M21 9.5Q19 9 16 14T11.5 19.5" />
      </RibbonTool>
    </Group>
    <Group>
      <RibbonTool label="批注">
        <path d="M13 17.5H7L3.5 20V3.5H21.5V13" />
        <path d="M18.5 14.5V22.5M14.5 18.5H22.5" stroke={green} />
      </RibbonTool>
    </Group>
    <Group>
      <RibbonTool label="页眉页脚" caret="down">
        <path d="M3.5 3.5H20.5V21.5H3.5Z" />
        <path d="M6.5 6.5H17.5V8.5H6.5ZM6.5 16.5H17.5V18.5H6.5Z" stroke="#2b57d9" />
      </RibbonTool>
    </Group>
    <Group>
      <ToolStack>
        <RibbonSmall label="动作">
          <rect x="3" y=".5" width="10" height="15" rx="5" />
          <path d="M8 3V8" />
        </RibbonSmall>
        <RibbonSmall label="超链接" caret="down">
          <rect x="0" y="2" width="10" height="7" rx="3.5" transform="rotate(45 5 5.5)" />
          <rect x="6" y="7" width="10" height="7" rx="3.5" transform="rotate(45 11 10.500)" />
        </RibbonSmall>
      </ToolStack>
    </Group>
    <Group>
      <ToolStack>
        <RibbonSmall label="对象">
          <path d="M5.5 4V.5H11.5L15.5 4.5V15.500H5.500V13.500M11.5 .5V4.5H15.5M.5 4.5H9.500V12.5H.5ZM2.5 7.500H7.5" />
        </RibbonSmall>
        <RibbonSmall label="附件">
          <path d="M6 4L12 10Q14 12.500 12.500 13.500T9 13L2 6.5Q-.5 3.500 1.500 1.500T6.5 1.500L14 8.500Q16.500 12 14.500 14.500T9 14.500M4 4.500L10.5 11.500" />
        </RibbonSmall>
      </ToolStack>
      <RibbonTool label="更多素材" caret="down">
        <g transform="translate(3 3) scale(1.15)">{materialIcon}</g>
      </RibbonTool>
    </Group>
  </Ribbon>
);

/* ---------- slide thumbnails ---------- */
const flag = "M0 20C20 6 36 2 50 2C104 2 128 37 184 37C204 37 220 28 231 20V133C220 142 204 151 184 151C128 151 104 115 50 115C36 115 20 118 0 133Z";

const thumbs = [
  <svg key="1" viewBox="0 0 202 114" aria-label="幻灯片 1">
    <text x="101" y="18" textAnchor="middle" fontSize="6.5" fontWeight="700" fill="#1f4e79">
      单击此处添加标题
    </text>
    <path d="M81 40H122V54H81Z" fill="#70ad47" />
    <path d="M55 68H96V82H55Z" fill="#f8cbad" />
    <path d="M107 68H148V82H107Z" fill="#b4c7e7" />
    <path d="M85.5 54L81.5 65M117 54L121 65" stroke="#2e75b6" />
    <path d="M80 67V63.5L83.5 65ZM122.5 67V63.5L119 65Z" fill="#2e75b6" />
    <g fontSize="4" fontWeight="700" fill="#fff" textAnchor="middle">
      <text x="101" y="49">启动</text>
      <text x="75" y="77">语文阅读</text>
      <text x="128" y="77">语文作文教语</text>
    </g>
  </svg>,
  <svg key="2" viewBox="0 0 202 114" aria-label="幻灯片 2">
    <defs>
      <linearGradient id="word" x1="0" x2="1">
        <stop offset="0" stopColor="#4fd1b0" />
        <stop offset="1" stopColor="#5b94d6" />
      </linearGradient>
      <linearGradient id="fade" x1="0" x2="0" y1="0" y2="1">
        <stop offset="0" stopColor="#fff" stopOpacity="0.3" />
        <stop offset="1" stopColor="#fff" />
      </linearGradient>
    </defs>
    <g id="art">
      <path d="M61.5 47.5H140.5V66.5H61.5Z" fill="#e2efda" stroke="#8db9e8" />
      <text x="101" y="62.5" textAnchor="middle" fontSize="15" fontWeight="700" fill="url(#word)">
        极光下载站
      </text>
    </g>
    <use href="#art" transform="matrix(1 0 0 -1 0 134)" opacity="0.6" />
    <path d="M60 67H142V88H60Z" fill="url(#fade)" />
  </svg>,
  <svg key="3" viewBox="0 0 202 114" aria-label="幻灯片 3">
    <path d={flag} transform="translate(78.5 29) scale(.165)" fill="#5b9bd5" stroke="#2e75b6" strokeWidth="5" />
  </svg>,
];

const Handle = ({ x, y }: { x: number; y: number }) => <circle cx={x} cy={y} r="5.5" fill="#fff" stroke="#7b7b7b" />;
const Diamond = ({ x, y }: { x: number; y: number }) => (
  <path d={`M${x} ${y - 6.5}L${x + 6.5} ${y}L${x} ${y + 6.5}L${x - 6.5} ${y}Z`} fill="#ffff96" stroke="#77776a" />
);

const Canvas = () => (
  <Slide>
    <SelectedShape width="260" height="200" viewBox="-12 -36 260 200" aria-label="波形">
      <path d={flag} fill="#5b9bd5" stroke="#2e75b6" />
      <path d="M-.5 .5H230.5V151.5H-.5Z" fill="none" stroke="#c0c3c8" />
      <path d="M114.5 -20V0" stroke="#555" />
      <circle cx="114.5" cy="-25" r="9.5" fill="#9a9a9a" />
      <path d="M119 -24A5 5 0 1 0 116 -20.5M115 -25.500H119.500V-22" fill="none" stroke="#fff" strokeWidth="2" />
      <Handle x={-0.5} y={0} />
      <Handle x={114.5} y={0} />
      <Handle x={230.5} y={0} />
      <Handle x={-0.5} y={75} />
      <Handle x={230.5} y={75} />
      <Handle x={-0.5} y={151} />
      <Handle x={114} y={151} />
      <Handle x={230.5} y={151} />
      <Diamond x={0} y={19} />
      <Diamond x={115.5} y={151.5} />
    </SelectedShape>
    <FloatTools>
      <FloatButton $round aria-label="收起">
        <Icon size={10} color="#777">
          <path d="M1 5H9" strokeWidth="2" />
        </Icon>
      </FloatButton>
      <FloatButton aria-label="样式">
        <Icon>
          <path d="M7 7L12 1.5Q14 .5 15 2T14 5L9 9.5" />
          <path d="M7 7L9 9.5Q9 11 7.5 11L4.5 8.5Q5.5 7 7 7ZM4.5 8.5Q2 9 2 11.5L.5 14.5Q5 15.5 7.5 11" stroke={blue} />
        </Icon>
      </FloatButton>
      <FloatButton aria-label="填充">
        <Icon>
          <path d="M3 2.5H8M4 5L8 .5L12 4L8.5 8.500H6ZM13.5 6V8.500M10 1.500L12.500 3.500" strokeWidth="1.2" />
          <rect x=".5" y="11.5" width="15" height="4" rx="2" fill="#ed7d31" stroke="#b85410" />
        </Icon>
      </FloatButton>
      <FloatButton aria-label="轮廓">
        <Icon>
          <path d="M1.5 12V1.5H14.5V12M3.5 10V3.5H12.5V10" />
          <rect x=".5" y="11.5" width="15" height="4" rx="2" fill="#5b9bd5" stroke="#2e6da4" />
        </Icon>
      </FloatButton>
      <FloatButton aria-label="更多">
        <Icon>
          <path d="M3 8H5M7 8H9M11 8H13" strokeWidth="2" />
        </Icon>
      </FloatButton>
    </FloatTools>
  </Slide>
);

/* ---------- right rail ---------- */
const railIcons: { label: string; icon: React.ReactNode }[] = [
  { label: "属性", icon: <><path d="M0 4.5H3M7 4.5H16M0 11.5H9M13 11.5H16" /><circle cx="5" cy="4.5" r="2.5" /><circle cx="11" cy="11.5" r="2.5" /></> },
  { label: "动画", icon: <path d="M5 5.500H.5L3 8M5 5.5L8 .5L10.5 5.5L15.5 6L12 9.500L13 15L9.500 13M1.500 9.5H7M3.500 12.5H7M1 15H5" /> },
  { label: "切换", icon: <path d="M5 9.5H.5V.5H11.5V4M6.5 4.5H15.5V13.5H6.5ZM.5 11.5Q1 14.5 5.5 14.5M3.5 12L6 14.5L3.5 17" /> },
  { label: "素材", icon: materialIcon },
  { label: "美化", icon: <><path d="M4 1.500Q6.500 2 7 4.500L14.5 12Q16 14 14.5 15T11.5 14.5L3 6Q1.500 3 4 1.500ZM1 15L6 10M10 6L12 4" /><circle cx="13.5" cy="2.5" r="1.8" /><circle cx="2.5" cy="11.5" r="1.8" /></> },
  { label: "查阅", icon: <><path d="M7 14.5L.5 13V1L8 3L15.5 1V7M8 3V8" /><circle cx="11.5" cy="11" r="3.5" /><path d="M14 13.5L16 15.5" /></> },
  { label: "帮助", icon: <><circle cx="8" cy="8" r="7.5" /><path d="M5.5 6.5Q5.5 4 8 4T10.5 6.5Q10.5 8 8 8.5V10M8 11.5V13" /></> },
  { label: "主题", icon: shirtIcon },
  { label: "更多", icon: <><circle cx="2" cy="8" r="1.5" /><circle cx="8" cy="8" r="1.5" /><circle cx="14" cy="8" r="1.5" /></> },
];

const ScrollArrow = ({ label, d }: { label: string; d: string }) => (
  <IconButton $w={15} $h={16} aria-label={label}>
    <Icon size={10}>
      <path d={d} fill="#6b6e72" stroke="none" />
    </Icon>
  </IconButton>
);

/* arrow pointing from tail to tip, with a long slim head */
const Pointer = ({ tail, tip }: { tail: [number, number]; tip: [number, number] }) => {
  const dx = tip[0] - tail[0];
  const dy = tip[1] - tail[1];
  const len = Math.hypot(dx, dy);
  const deg = (Math.atan2(dy, dx) * 180) / Math.PI;
  return (
    <path
      transform={`translate(${tail[0]} ${tail[1]}) rotate(${deg})`}
      d={`M0 -1.5L${len - 22} -2.5L${len - 27} -8L${len} 0L${len - 27} 8L${len - 22} 2.5L0 1.5Z`}
      fill="#ff0000"
      stroke="#c01010"
      strokeWidth=".5"
    />
  );
};

const menu = ["开始", "插入", "设计", "切换", "动画", "放映", "审阅", "视图", "工具", "会员专享"];

export default function App() {
  return (
    <Page>
      <GlobalStyle />
      <TitleBar>
        <DocTab $width={120}>
          <Icon>
            <path d="M0 2.5H4L6 11L8 4H11L10 8L12 10L13.5 2.5H16.5L13 14.5H10.5L9 10.5L7 14.5H4Z" fill="#f0452f" stroke="none" />
          </Icon>
          WPS Office
        </DocTab>
        <DocTab $width={132}>
          <Icon>
            <path d="M1 0H6Q15 1 15 8T6 16H1Z" fill="#ef4b4f" stroke="none" />
            <path d="M7 12Q3 9 5 6Q8 8 7 12ZM7 12Q7 7 11 4Q12 9 7 12Z" fill="#fff" stroke="none" />
          </Icon>
          找稻壳模板
        </DocTab>
        <DocTab $width={240} $active>
          <Icon>
            <rect width="16" height="16" rx="1" fill="#dd3b24" stroke="none" />
            <path d="M5.5 12.5V4H8.5Q11 4 11 6.5T8.5 9H5.5" stroke="#fff" strokeWidth="1.5" />
          </Icon>
          演示文稿(2).pptx
          <UnsavedDot />
        </DocTab>
        <IconButton $w={28} $h={30} aria-label="新建">
          <Icon>
            <path d="M8 1V15M1 8H15" strokeWidth="1.5" />
          </Icon>
        </IconButton>
        <IconButton $w={8} $h={30} aria-label="标签列表">
          <Caret />
        </IconButton>
        <WindowTools>
          <IconButton $w={32} aria-label="工作区">
            <Icon>
              <path d="M1.5 3.5H11.5V15.5H1.5ZM3 .5H14.5V14" strokeWidth="1.2" />
            </Icon>
          </IconButton>
          <IconButton $w={33} aria-label="应用">
            <Icon>
              <path d="M8 .5L14.5 4.5V11.5L8 15.5L1.5 11.5V4.5ZM4 5.5L8 8L12 5.5M8 8V13" strokeWidth="1.2" />
            </Icon>
          </IconButton>
          <IconButton $w={38} aria-label="账户">
            <Icon size={20}>
              <circle cx="10" cy="10" r="10" fill="#cfdade" stroke="none" />
              <path d="M9 5Q14 2 15.5 9L17 16L13 18L12 10Z" fill="#2e2226" stroke="none" />
              <circle cx="11" cy="8" r="3" fill="#d9a592" stroke="none" />
              <path d="M5 17Q7 10 12 12L13 19Q8 20.5 5 17Z" fill="#e4ecee" stroke="none" />
            </Icon>
          </IconButton>
          <IconButton $w={40} aria-label="最小化">
            <Icon color="#8b8d91">
              <path d="M3 7.5H13" />
            </Icon>
          </IconButton>
          <IconButton $w={40} aria-label="还原">
            <Icon color="#8b8d91">
              <path d="M2.5 5.5H10.5V13.5H2.5ZM5.5 5.5V2.5H13.5V10.5H10.5" />
            </Icon>
          </IconButton>
          <IconButton $w={40} aria-label="关闭">
            <Icon color="#6e7074">
              <path d="M3 3L13 13M13 3L3 13" />
            </Icon>
          </IconButton>
        </WindowTools>
      </TitleBar>

      <MenuRow>
        <FileButton>
          <Icon size={9}>
            <path d="M1 .5H9M1 4.5H7M1 8.5H9" />
          </Icon>
          文件
        </FileButton>
        <VDivider $m="0 0 0 12px" />
        <QuickTools>
          <IconButton $w={16} aria-label="保存">
            <Icon>
              <path d="M1.5 1.5H10.5L14.5 5.5V14.5H1.5ZM4.5 14.5V9.5H11.5V14.5M4.5 5.5H8.5" />
            </Icon>
          </IconButton>
          <IconButton $w={16} aria-label="导出">
            <Icon>
              <path d="M5.5 6V1.5H9.500Q13.500 1.500 13.5 5.5T9.5 9.5H5Q2 9.500 2 12T4.500 14.500T7.500 12V6" />
            </Icon>
          </IconButton>
          <IconButton $w={16} aria-label="打印">
            <Icon>
              <path d="M4.5 5.5V1.5H11.5V5.5M4.5 12.5H1.5V5.5H14.5V12.5H11.5M4.5 9.5H11.5V14.5H4.5Z" />
            </Icon>
          </IconButton>
          <IconButton $w={16} aria-label="打印预览">
            <Icon>
              <path d="M4.5 5.5V1.5H11.5V5.5M4 12.5H1.5V5.5H14.5V8M4.5 9V14.5H7" />
              <circle cx="10.5" cy="11" r="3" />
              <path d="M12.5 13L15 15.5" />
            </Icon>
          </IconButton>
          <UndoGroup>
            <IconButton $w={16} aria-label="撤销">
              <Icon>
                <path d="M3.5 2V6.5H8M4 6Q8 1 12 3.5T10.5 12L8 14.5" />
              </Icon>
            </IconButton>
            <IconButton $w={8} aria-label="撤销记录">
              <Caret />
            </IconButton>
          </UndoGroup>
          <IconButton $w={16} aria-label="恢复">
            <Icon color="#b4b6b9">
              <path d="M13.5 2V6.5H9M13 6Q9 1 5 3.5T6.5 12L9 14.5" />
            </Icon>
          </IconButton>
          <IconButton $w={16} aria-label="更多快捷">
            <Icon>
              <path d="M4 6L8 10L12 6" />
            </Icon>
          </IconButton>
        </QuickTools>
        <VDivider $m="0 22px 0 14px" />
        <MenuTabs>
          {menu.map((m) => (
            <MenuTab key={m} $active={m === "插入"}>
              {m}
            </MenuTab>
          ))}
        </MenuTabs>
        <VDivider $m="0 21px" />
        <MenuTabs>
          <MenuTab $tool>绘图工具</MenuTab>
          <MenuTab $tool>文本工具</MenuTab>
        </MenuTabs>
        <VDivider $h={20} $m="0 9px 0 27px" />
        <IconButton $w={18} aria-label="搜索">
          <Icon>
            <circle cx="7" cy="6.5" r="5" />
            <path d="M10.5 10.5L15.5 15.5" />
          </Icon>
        </IconButton>
        <SyncButton>
          <Icon>
            <path d="M4 5.5Q5 1.5 8 1.5T12 5.5Q15.5 7 15.5 10.5T11.5 14.5H4.5Q.5 14.5 .5 10.5T4 5.5Z" />
            <path d="M10 9.5A2.5 2.5 0 1 1 8 7.5H10.5M9 5.5L10.5 7.5L9 9" stroke={green} />
          </Icon>
          有修改
        </SyncButton>
        <ShareButton>
          <Icon color="#fff">
            <path d="M1.5 9V12.5Q1.5 14.5 3.5 14.5H12.5Q14.5 14.5 14.5 12.5V10M3 8Q5 3.5 14 4.5M10.5 1L14 4.5L10.5 8" />
          </Icon>
          分享
        </ShareButton>
      </MenuRow>

      <RibbonBar />

      <Body>
        <SlidePane>
          <PaneHeader>
            <PaneTab>大纲</PaneTab>
            <PaneTab $active>幻灯片</PaneTab>
            <CollapseButton aria-label="折叠">
              <Icon>
                <path d="M10.5 3L5.5 8L10.5 13" />
              </Icon>
            </CollapseButton>
          </PaneHeader>
          <SlideList>
            {thumbs.map((t, i) => (
              <SlideItem key={i} $active={i === 2}>
                <SlideNo>{i + 1}</SlideNo>
                <Thumb $active={i === 2}>{t}</Thumb>
              </SlideItem>
            ))}
          </SlideList>
          <AddSlide aria-label="添加幻灯片">
            <Icon>
              <path d="M8 1V15M1 8H15" strokeWidth="1.5" />
            </Icon>
          </AddSlide>
        </SlidePane>

        <Editor>
          <Stage>
            <SlideArea>
              <Canvas />
            </SlideArea>
            <ScrollColumn>
              <ScrollArrow label="向上" d="M5 3L8 7H2Z" />
              <ScrollTrack>
                <ScrollThumb />
              </ScrollTrack>
              <ScrollArrow label="向下" d="M2 3H8L5 7Z" />
              <ScrollArrow label="上一页" d="M5 1L8 5H2ZM5 5L8 9H2Z" />
              <ScrollArrow label="下一页" d="M2 1H8L5 5ZM2 5H8L5 9Z" />
            </ScrollColumn>
          </Stage>
          <Notes>单击此处添加备注</Notes>
        </Editor>

        <Panel>
          <PanelHeader>
            <PanelTitle>
              对象属性
              <Caret />
            </PanelTitle>
            <IconButton $w={28} $h={20} aria-label="固定">
              <Icon>
                <path d="M9.5 1.5L14.5 6.5L12.5 7.5L10.5 12L4 5.5L8.5 3.5ZM7 9L1.5 14.5" />
              </Icon>
            </IconButton>
            <IconButton $w={26} $h={20} aria-label="关闭面板">
              <Icon>
                <path d="M3 3L13 13M13 3L3 13" />
              </Icon>
            </IconButton>
          </PanelHeader>
          <Segments>
            <Segment $active>形状选项</Segment>
            <Segment>文本选项</Segment>
          </Segments>
          <SubTabs>
            <SubTab $active>填充与线条</SubTab>
            <SubTab>效果</SubTab>
            <SubTab>大小与属性</SubTab>
          </SubTabs>
          {(["fill", "line"] as const).map((kind) => (
            <Property key={kind}>
              <Icon size={6}>
                <path d="M0 -.5L6 3L0 6.5Z" fill="#6b6e72" stroke="none" />
              </Icon>
              <PropertyLabel htmlFor={kind}>{kind === "fill" ? "填充" : "线条"}</PropertyLabel>
              <SelectBox>
                <Select id={kind} $kind={kind}>
                  <option aria-label="蓝色" />
                </Select>
                <Svg width="10" height="8" viewBox="0 0 10 8" aria-hidden="true">
                  <path d="M1 2L5 6L9 2" />
                </Svg>
              </SelectBox>
            </Property>
          ))}
        </Panel>

        <Rail>
          <IconButton $w={32} $h={16} aria-label="收起侧栏">
            <Icon color="#8b8d91">
              <path d="M1 8H15" strokeWidth="2" />
            </Icon>
          </IconButton>
          {railIcons.map((r, i) => (
            <RailButton key={r.label} $active={i === 0} aria-label={r.label}>
              <Icon>{r.icon}</Icon>
            </RailButton>
          ))}
        </Rail>
      </Body>

      <StatusBar>
        <span>幻灯片 3 / 3</span>
        <VDivider $m="0 14px 0 12px" />
        <StatusButton>
          <Icon>{shirtIcon}</Icon>
          Office 主题
        </StatusButton>
        <StatusRight>
          <StatusGroup $gap={15} $pad={14}>
            <StatusButton>
              <Icon>
                <path d="M2.5 7.5H13.5V11Q13.5 15.5 8 15.5T2.5 11ZM3.5 7.5V5.5Q3.5 2.5 8 2.5T12.5 5.5M6.5 .5H9.5" />
              </Icon>
              智能美化
              <Caret />
            </StatusButton>
          </StatusGroup>
          <StatusGroup $gap={19} $pad={16}>
            <StatusButton>
              <Icon>
                <path d="M1 3.5H8M1 8.5H15M1 13.5H15M10 2L12.5 4.5L15 2" />
              </Icon>
              备注
              <Caret />
            </StatusButton>
            <StatusButton>
              <Icon>{commentIcon}</Icon>
              批注
            </StatusButton>
          </StatusGroup>
          <StatusGroup>
            <ViewButton $active aria-label="普通视图">
              <Icon>
                <path d="M.5 2.5H15.5V13.5H.5ZM4.5 4.5V11.5" />
              </Icon>
            </ViewButton>
            <ViewButton aria-label="浏览视图">
              <Icon>
                <path d="M1.5 2.5H6.5V6.5H1.5ZM9.5 2.5H14.5V6.5H9.5ZM1.5 9.5H6.5V13.5H1.5ZM9.5 9.5H14.5V13.5H9.5Z" />
              </Icon>
            </ViewButton>
            <ViewButton aria-label="阅读视图">
              <Icon>
                <path d="M8 4.5Q5 2 1.5 2.5V12.5Q5 12 8 14.5Q11 12 14.5 12.5V2.5Q11 2 8 4.5V9" />
              </Icon>
            </ViewButton>
          </StatusGroup>
          <StatusGroup>
            <PlayButton aria-label="播放">
              <Icon size={10}>
                <path d="M2 1L8.5 5L2 9Z" fill="#fff" stroke="none" />
              </Icon>
            </PlayButton>
            <IconButton $w={12} aria-label="播放选项">
              <Caret />
            </IconButton>
          </StatusGroup>
          <StatusGroup $gap={18} $pad={14}>
            <IconButton $w={16} aria-label="适应窗口">
              <Icon>
                <path d="M1.5 5V1.5H5M11 1.5H14.5V5M14.5 11V14.5H11M5 14.5H1.5V11M4.5 4.5H11.5V11.5H4.5Z" />
              </Icon>
            </IconButton>
            <ZoomValue>99%</ZoomValue>
            <IconButton $w={8} aria-label="缩放比例">
              <Caret />
            </IconButton>
          </StatusGroup>
          <IconButton $w={14} aria-label="缩小">
            <Icon size={12}>
              <path d="M0 6H12" strokeWidth="2" />
            </Icon>
          </IconButton>
          <Zoom type="range" aria-label="缩放" defaultValue={45} />
          <IconButton $w={12} aria-label="放大">
            <Icon size={12}>
              <path d="M1 6H11M6 1V11" strokeWidth="2" />
            </Icon>
          </IconButton>
        </StatusRight>
      </StatusBar>

      <Watermark>
        <svg width="44" height="44" viewBox="0 0 44 44" aria-hidden="true">
          <defs>
            <linearGradient id="swoosh" x1="1" y1="0" x2="0" y2="1">
              <stop offset="0" stopColor="#4fb8e8" />
              <stop offset="1" stopColor="#4a78c0" />
            </linearGradient>
            <linearGradient id="leaf" x1="1" y1="0" x2="0" y2="1">
              <stop offset="0" stopColor="#35b06c" />
              <stop offset="1" stopColor="#c9d878" />
            </linearGradient>
          </defs>
          <path d="M43 2C22 0 3 12 1 28C0 35 5 39 12 36C8 34 7 30 9 25C13 14 26 5 43 2Z" fill="url(#swoosh)" />
          <path d="M18 22C26 12 40 15 40 25C40 36 24 44 5 42C20 40 32 33 32 25C32 20 25 19 18 22Z" fill="url(#leaf)" />
          <path d="M12 32C10 24 18 17 27 18C20 20 16 25 18 31C20 34 24 32 26 29C25 36 15 39 12 32Z" fill="#4c86c8" />
        </svg>
        <WatermarkText>
          极光下载站
          <WatermarkUrl>www.xz7.com</WatermarkUrl>
        </WatermarkText>
      </Watermark>

      <Annotations width="400" height="320" viewBox="0 0 400 320" aria-hidden="true">
        <Pointer tail={[130, 210]} tip={[278, 132]} />
        <Pointer tail={[386, 135]} tip={[366, 65]} />
        <Pointer tail={[224, 308]} tip={[287, 218]} />
      </Annotations>
    </Page>
  );
}
